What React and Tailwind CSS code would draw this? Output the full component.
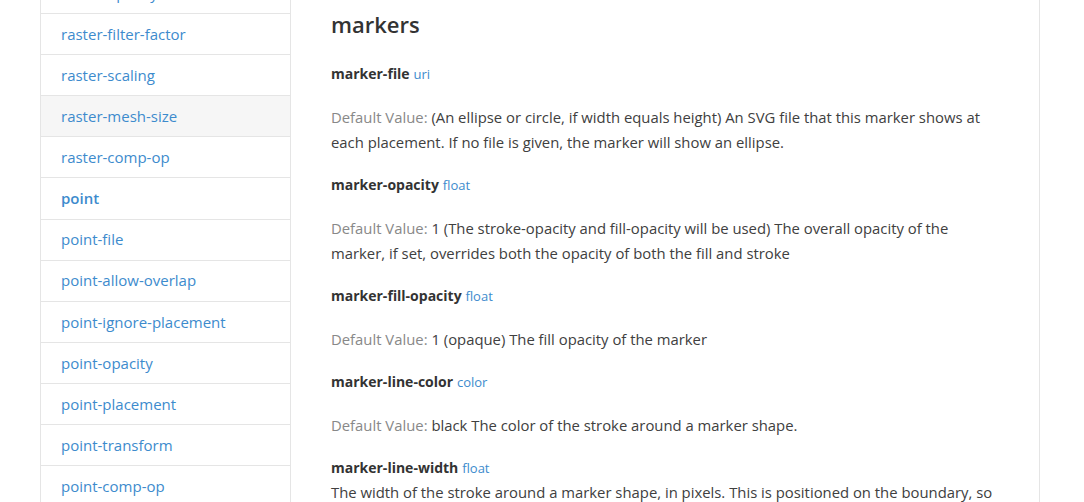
import React from "react";

const navItems = [
  { label: "raster-opacity" },
  { label: "raster-filter-factor" },
  { label: "raster-scaling" },
  { label: "raster-mesh-size", active: true },
  { label: "raster-comp-op" },
  { label: "point", bold: true },
  { label: "point-file" },
  { label: "point-allow-overlap" },
  { label: "point-ignore-placement" },
  { label: "point-opacity" },
  { label: "point-placement" },
  { label: "point-transform" },
  { label: "point-comp-op" },
  { label: "point-geometry-transform" },
];

const props = [
  {
    name: "marker-file",
    type: "uri",
    value: "(An ellipse or circle, if width equals height)",
    text: "An SVG file that this marker shows at each placement. If no file is given, the marker will show an ellipse.",
  },
  {
    name: "marker-opacity",
    type: "float",
    value: "1",
    text: "(The stroke-opacity and fill-opacity will be used) The overall opacity of the marker, if set, overrides both the opacity of both the fill and stroke",
  },
  {
    name: "marker-fill-opacity",
    type: "float",
    value: "1",
    text: "(opaque) The fill opacity of the marker",
  },
  {
    name: "marker-line-color",
    type: "color",
    value: "black",
    text: "The color of the stroke around a marker shape.",
  },
];

export default function App() {
  return (
    <div className="h-[502px] overflow-hidden bg-white font-['Open_Sans',sans-serif] text-[14.85px] text-[#404040]">
      <div className="ml-[40px] flex w-[1000px] border-r border-[#e5e5e5]">
        {/* sidebar */}
        <ul className="-mt-[27px] w-[251px] shrink-0 border-x border-[#e5e5e5]">
          {navItems.map((item) => (
            <li
              key={item.label}
              className={`flex h-[41.1px] items-center border-b border-[#e5e5e5] pl-[20px] text-[15px] ${
                item.active ? "bg-[#f6f6f6]" : "bg-white"
              }`}
            >
              <a className={`text-[#3d8bcd] ${item.bold ? "font-semibold" : ""}`}>{item.label}</a>
            </li>
          ))}
        </ul>

        {/* content */}
        <div className="w-[709px] pl-[40px] pr-[2px]">
          <h2 className="mt-[9px] text-[22px] font-semibold leading-[30px] text-[#333]">markers</h2>
          <div className="mt-[22px]">
            {props.map((p) => (
              <div key={p.name} className="mb-[17px]">
                <div className="leading-[25px]">
                  <span className="text-[14px] font-bold text-[#333]">{p.name}</span>{" "}
                  <span className="text-[13px] text-[#3d8bcd]">{p.type}</span>
                </div>
                <p className="mt-[18px] leading-[25px]">
                  <span className="text-[#888]">Default Value:</span> {p.value} {p.text}
                </p>
              </div>
            ))}
            <div className="leading-[24px]">
              <span className="text-[14px] font-bold text-[#333]">marker-line-width</span>{" "}
              <span className="text-[13px] text-[#3d8bcd]">float</span>
            </div>
            <p className="leading-[25px]">
              The width of the stroke around a marker shape, in pixels. This is positioned on the boundary, so
              high values can cover the area itself.
            </p>
          </div>
        </div>
      </div>
    </div>
  );
}
